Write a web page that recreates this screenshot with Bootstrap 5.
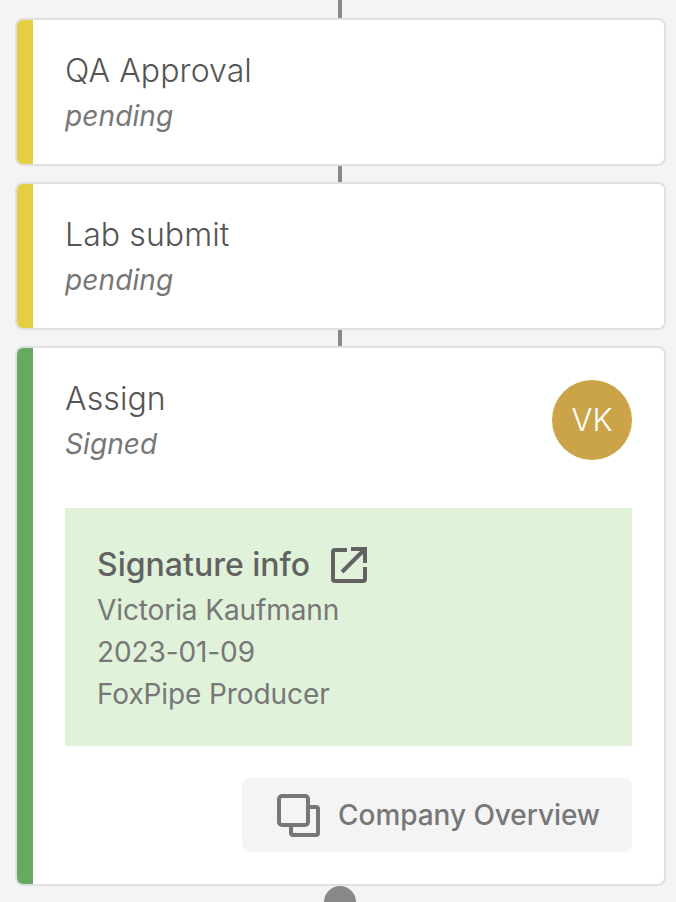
<!DOCTYPE html>
<html lang="en">
<head>
<meta charset="utf-8">
<title>Workflow</title>
<link href="https://cdn.jsdelivr.net/npm/bootstrap@5.3.0/dist/css/bootstrap.min.css" rel="stylesheet">
<style>
html, body { height: 100%; overflow: hidden; }
body { background: #f4f4f4; font-family: Inter, "Liberation Sans", sans-serif; color: #5f5f5f; }
.flow-wrap { padding: 0 10px 0 15px; height: 902px; overflow: hidden; }
.link-line { width: 4px; background: #888; margin-left: 323px; }
.h-18 { height: 18px; }
.h-16 { height: 16px; }
.flow-end { width: 32px; height: 32px; border-radius: 50%; background: #888; margin-left: 309px; }
.step-card { border: 2px solid #e0e0e0; border-radius: 8px; background: #fff; overflow: hidden; width: 651px; }
.step-bar { width: 16px; flex: none; }
.bar-pending { background: #e3cf41; }
.bar-signed { background: #65ab5f; }
.step-body { padding: 32px 32px 30px; flex: 1 1 auto; min-width: 0; }
.step-body-tall { padding-bottom: 32px; }
.step-title { font-size: 32px; line-height: 38px; margin: 0 0 8px; font-weight: 300; letter-spacing: .1px; color: #555; }
.step-state { font-size: 28px; line-height: 36px; font-style: italic; font-weight: 400; letter-spacing: .1px; color: #777; margin: 0; }
.avatar-vk { width: 80px; height: 80px; background: #cba44a; color: #fff; font-size: 31px; font-weight: 300; }
.sig-box { background: #e1f2da; margin-top: 46px; padding: 36px 32px 31px; }
.sig-title { font-size: 32px; line-height: 42px; font-weight: 500; color: #626262; gap: 21px; margin-bottom: 3px; }
.sig-line { font-size: 28px; line-height: 42px; font-weight: 400; letter-spacing: -.1px; color: #777; }
.overview-btn { background: #f4f4f4; border: 0; border-radius: 8px; color: #777; font-size: 28px; font-weight: 500; letter-spacing: -.06px; height: 74px; padding: 0 32px 0 35px; margin-top: 32px; gap: 18px; }
</style>
</head>
<body>
<main class="flow-wrap">
  <div class="link-line h-18"></div>
  <section class="step-card d-flex">
    <div class="step-bar bar-pending"></div>
    <div class="step-body">
      <h2 class="step-title">QA Approval</h2>
      <p class="step-state">pending</p>
    </div>
  </section>
  <div class="link-line h-16"></div>
  <section class="step-card d-flex">
    <div class="step-bar bar-pending"></div>
    <div class="step-body">
      <h2 class="step-title">Lab submit</h2>
      <p class="step-state">pending</p>
    </div>
  </section>
  <div class="link-line h-16"></div>
  <section class="step-card d-flex">
    <div class="step-bar bar-signed"></div>
    <div class="step-body step-body-tall">
      <div class="d-flex justify-content-between align-items-start">
        <div>
          <h2 class="step-title">Assign</h2>
          <p class="step-state">Signed</p>
        </div>
        <div class="avatar-vk rounded-circle d-flex align-items-center justify-content-center">VK</div>
      </div>
      <div class="sig-box">
        <div class="sig-title d-flex align-items-center">Signature info
          <svg width="36" height="36" viewBox="0 0 36 36" fill="none" stroke="#626262" stroke-width="4" aria-hidden="true"><path d="M16 3H4a2 2 0 0 0-2 2v27a2 2 0 0 0 2 2h28a2 2 0 0 0 2-2V20"/><path d="M11 25 33 3M20 2h14v14"/></svg>
        </div>
        <div class="sig-line">Victoria Kaufmann</div>
        <div class="sig-line">2023-01-09</div>
        <div class="sig-line">FoxPipe Producer</div>
      </div>
      <div class="d-flex justify-content-end">
        <button type="button" class="btn overview-btn d-flex align-items-center">
          <svg width="43" height="43" viewBox="0 0 43 43" fill="none" stroke="#777" stroke-width="4" aria-hidden="true"><rect x="2" y="2" width="29" height="29" rx="3"/><path d="M31 13h8a2 2 0 0 1 2 2v24a2 2 0 0 1-2 2H16a2 2 0 0 1-2-2v-8"/></svg>
          Company Overview
        </button>
      </div>
    </div>
  </section>
  <div class="flow-end"></div>
</main>
<script src="https://cdn.jsdelivr.net/npm/bootstrap@5.3.0/dist/js/bootstrap.bundle.min.js"></script>
</body>
</html>
